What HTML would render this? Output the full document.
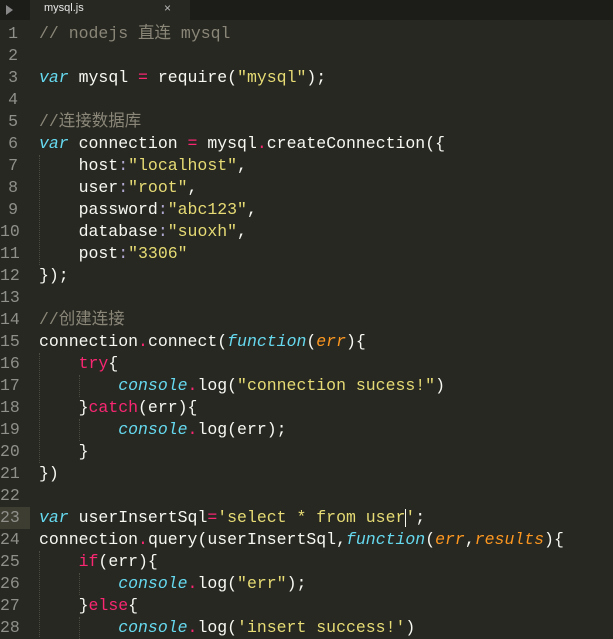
<!DOCTYPE html>
<html><head><meta charset="utf-8"><style>
html,body{margin:0;padding:0;width:613px;height:636px;overflow:hidden;background:#272822}
.tabs{position:absolute;left:0;top:0;width:613px;height:20px;background:#1c1d19}
.tab{position:absolute;left:30px;top:0;width:160px;height:20px;background:#272822}
.tab span{position:absolute;left:14px;top:2px;font:11px "Liberation Sans",sans-serif;color:#e8e8e8}
.tab b{position:absolute;left:134px;top:1px;font:12px "Liberation Sans",sans-serif;color:#b8b8b8}
.arrow{position:absolute;left:6px;top:5px;width:0;height:0;border-left:7px solid #888;border-top:5px solid transparent;border-bottom:5px solid transparent}
.code{position:absolute;left:0;top:23px;font:16.5px "Liberation Mono","Noto Sans CJK SC",monospace;color:#f8f8f2}
.l{position:relative;height:22px;line-height:22px;white-space:pre}
.n{position:absolute;left:0;width:18px;text-align:right;color:#8f908a}
.t{position:absolute;left:39px}
.hl .n{background:#3e3d32;width:30px;text-align:left}
.c{color:#8a8678}.k{color:#f92672}.s{color:#e6db74}.i{color:#66d9ef;font-style:italic}.p{color:#fd971f;font-style:italic}.o{color:#b0a8d0}
.g{position:absolute;width:0;border-left:1px dotted #4a4a40}
.cur{display:inline-block;width:1px;height:18px;background:#f8f8f0;vertical-align:middle;margin-right:-1px}
</style></head><body>
<div class="tabs"><div class="arrow"></div><div class="tab"><span>mysql.js</span><b>×</b></div></div>
<div class="g" style="left:39px;top:155px;height:110px"></div>
<div class="g" style="left:39px;top:353px;height:110px"></div>
<div class="g" style="left:79px;top:375px;height:22px"></div>
<div class="g" style="left:79px;top:419px;height:22px"></div>
<div class="g" style="left:39px;top:551px;height:86px"></div>
<div class="g" style="left:79px;top:573px;height:22px"></div>
<div class="g" style="left:79px;top:617px;height:22px"></div>
<div class="code">
<div class="l"><span class="n">1</span><span class="t c">// nodejs 直连 mysql</span></div>
<div class="l"><span class="n">2</span></div>
<div class="l"><span class="n">3</span><span class="t"><span class="i">var</span> mysql <span class="k">=</span> require(<span class="s">"mysql"</span>);</span></div>
<div class="l"><span class="n">4</span></div>
<div class="l"><span class="n">5</span><span class="t c">//连接数据库</span></div>
<div class="l"><span class="n">6</span><span class="t"><span class="i">var</span> connection <span class="k">=</span> mysql<span class="k">.</span>createConnection({</span></div>
<div class="l"><span class="n">7</span><span class="t">    host<span class="o">:</span><span class="s">"localhost"</span>,</span></div>
<div class="l"><span class="n">8</span><span class="t">    user<span class="o">:</span><span class="s">"root"</span>,</span></div>
<div class="l"><span class="n">9</span><span class="t">    password<span class="o">:</span><span class="s">"abc123"</span>,</span></div>
<div class="l"><span class="n">10</span><span class="t">    database<span class="o">:</span><span class="s">"suoxh"</span>,</span></div>
<div class="l"><span class="n">11</span><span class="t">    post<span class="o">:</span><span class="s">"3306"</span></span></div>
<div class="l"><span class="n">12</span><span class="t">});</span></div>
<div class="l"><span class="n">13</span></div>
<div class="l"><span class="n">14</span><span class="t c">//创建连接</span></div>
<div class="l"><span class="n">15</span><span class="t">connection<span class="k">.</span>connect(<span class="i">function</span>(<span class="p">err</span>){</span></div>
<div class="l"><span class="n">16</span><span class="t">    <span class="k">try</span>{</span></div>
<div class="l"><span class="n">17</span><span class="t">        <span class="i">console</span><span class="k">.</span>log(<span class="s">"connection sucess!"</span>)</span></div>
<div class="l"><span class="n">18</span><span class="t">    }<span class="k">catch</span>(err){</span></div>
<div class="l"><span class="n">19</span><span class="t">        <span class="i">console</span><span class="k">.</span>log(err);</span></div>
<div class="l"><span class="n">20</span><span class="t">    }</span></div>
<div class="l"><span class="n">21</span><span class="t">})</span></div>
<div class="l"><span class="n">22</span></div>
<div class="l hl"><span class="n">23</span><span class="t"><span class="i">var</span> userInsertSql<span class="k">=</span><span class="s">'select * from user<span class="cur"></span>'</span>;</span></div>
<div class="l"><span class="n">24</span><span class="t">connection<span class="k">.</span>query(userInsertSql,<span class="i">function</span>(<span class="p">err</span>,<span class="p">results</span>){</span></div>
<div class="l"><span class="n">25</span><span class="t">    <span class="k">if</span>(err){</span></div>
<div class="l"><span class="n">26</span><span class="t">        <span class="i">console</span><span class="k">.</span>log(<span class="s">"err"</span>);</span></div>
<div class="l"><span class="n">27</span><span class="t">    }<span class="k">else</span>{</span></div>
<div class="l"><span class="n">28</span><span class="t">        <span class="i">console</span><span class="k">.</span>log(<span class="s">'insert success!'</span>)</span></div>
</div>
</body></html>
